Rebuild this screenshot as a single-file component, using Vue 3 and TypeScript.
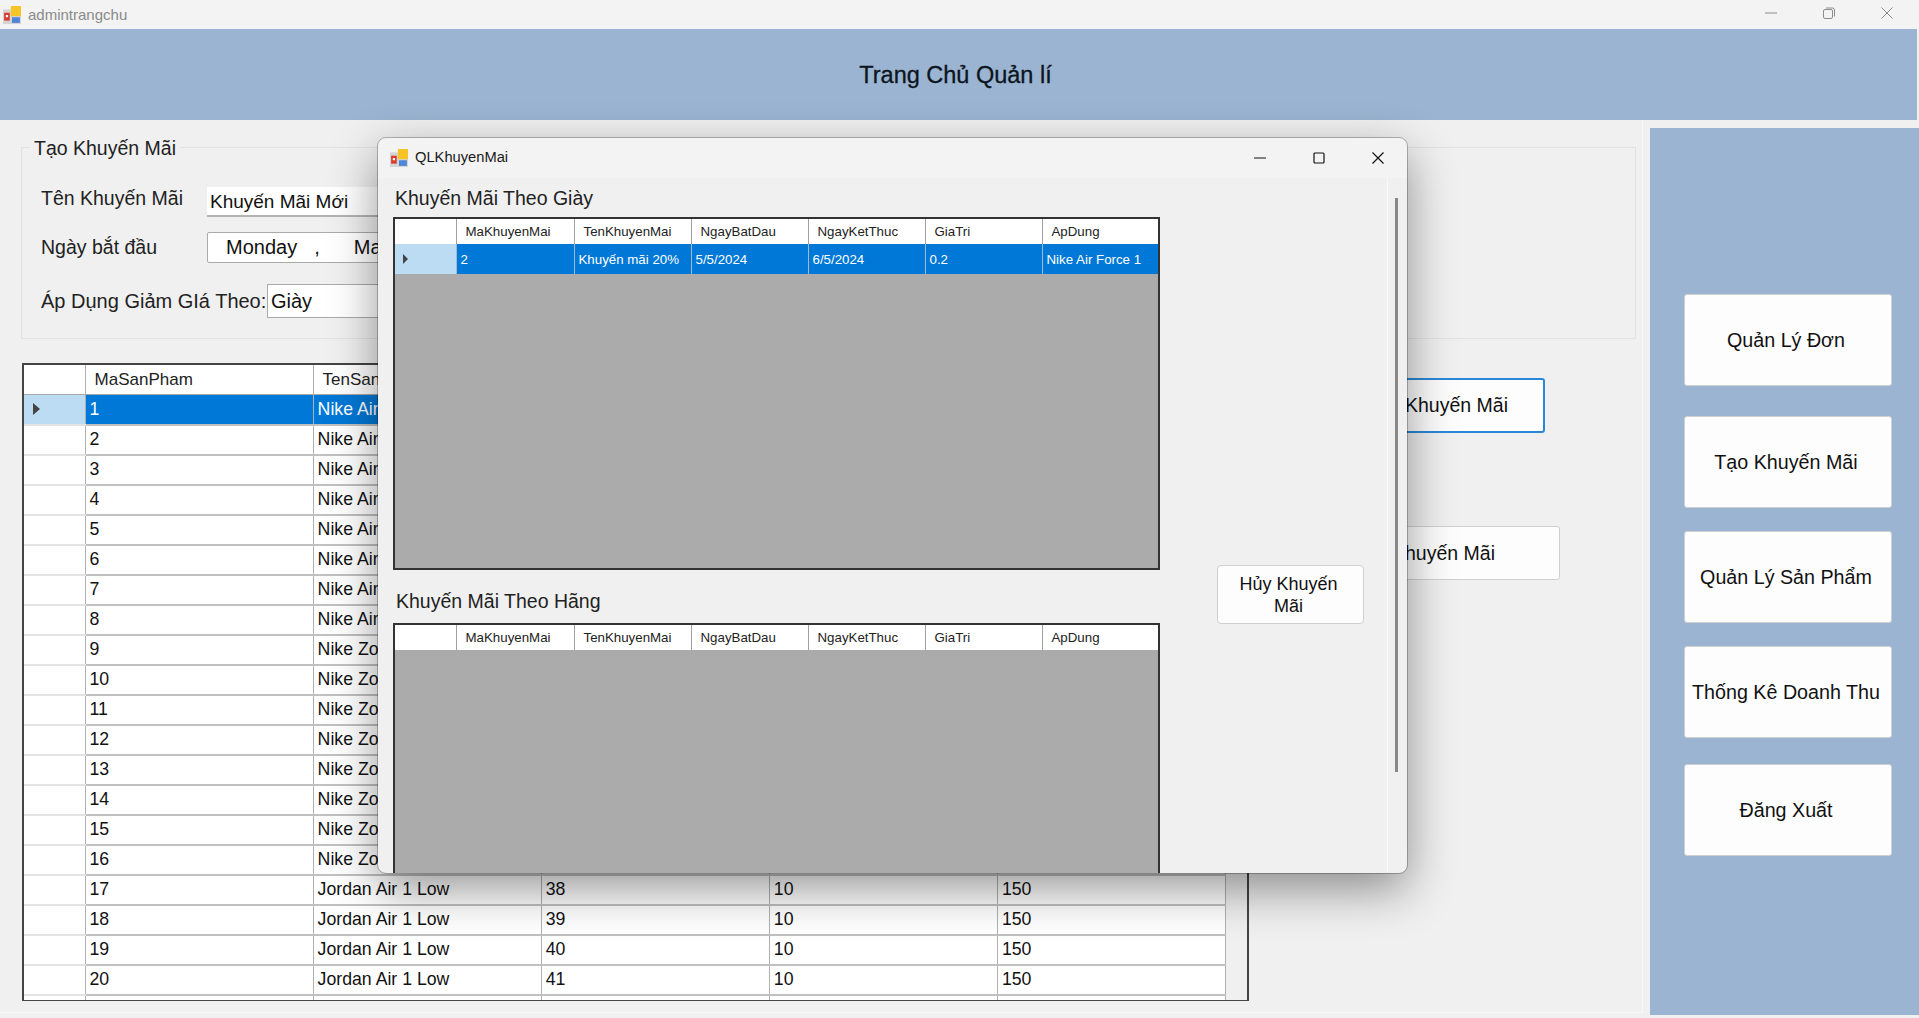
<template>
  <div class="desktop">
    <div class="titlebar">
      <svg class="app-icon" viewBox="0 0 16 16">
        <rect x="0" y="3" width="16" height="13" fill="#d4d4d4" />
        <rect x="1" y="6" width="5" height="7" fill="#d93a2b" />
        <rect x="2.5" y="8" width="2" height="2" fill="#fff" />
        <rect x="7" y="0" width="9" height="9" fill="#f6c425" />
        <rect x="8" y="10" width="7" height="5" fill="#4d86d8" />
      </svg>
      <span class="titlebar-text">admintrangchu</span>
      <div class="win-controls">
        <svg viewBox="0 0 12 12"><path d="M0 6h12" /></svg>
        <svg viewBox="0 0 12 12"><rect x="0.5" y="2.5" width="9" height="9" rx="1.5" /><path d="M3 1h6.5A2 2 0 0 1 11.5 3v6.5" /></svg>
        <svg viewBox="0 0 12 12"><path d="M0.5 0.5l11 11M11.5 0.5l-11 11" /></svg>
      </div>
    </div>

    <header class="banner">Trang Chủ Quản lí</header>

    <div class="content">
      <main class="left">
        <fieldset class="group">
          <legend><span class="legend-text">Tạo Khuyến Mãi</span></legend>
          <div class="form-row row-name">
            <label class="lbl">Tên Khuyến Mãi</label>
            <div class="text-input">Khuyến Mãi Mới</div>
          </div>
          <div class="form-row row-date">
            <label class="lbl">Ngày bắt đầu</label>
            <div class="date-input"><span>Monday</span><span class="comma">,</span><span>May</span></div>
          </div>
          <div class="form-row row-type">
            <label class="lbl lbl-wide">Áp Dụng Giảm GIá Theo:</label>
            <div class="combo">Giày</div>
          </div>
        </fieldset>

        <div class="products-row">
          <div class="products">
            <table class="product-table">
              <colgroup>
                <col class="c-head" />
                <col v-for="n in 5" :key="n" class="c-prod" />
              </colgroup>
              <thead>
                <tr>
                  <th></th>
                  <th v-for="c in productCols" :key="c">{{ c }}</th>
                </tr>
              </thead>
              <tbody>
                <tr v-for="(p, i) in products" :key="p.id" :class="{ selected: i === 0 }">
                  <td class="row-head"><span v-if="i === 0" class="arrow"></span></td>
                  <td>{{ p.id }}</td>
                  <td>{{ p.name }}</td>
                  <td>{{ p.size }}</td>
                  <td>{{ p.qty }}</td>
                  <td>{{ p.price }}</td>
                </tr>
                <!-- next row is scrolled out, only its top shows -->
                <tr>
                  <td class="row-head"></td>
                  <td v-for="n in 5" :key="n"></td>
                </tr>
              </tbody>
            </table>
          </div>
          <div class="actions">
            <button class="btn action focused">Tạo Khuyến Mãi</button>
            <button class="btn action second">Xem Khuyến Mãi</button>
          </div>
        </div>
      </main>

      <aside class="side">
        <button v-for="m in menu" :key="m.label" class="btn side-btn" :style="{ marginTop: m.gap + 'px' }">{{ m.label }}</button>
      </aside>
    </div>

    <section class="modal">
      <div class="modal-title">
        <svg class="app-icon" viewBox="0 0 16 16">
          <rect x="0" y="3" width="16" height="13" fill="#d4d4d4" />
          <rect x="1" y="6" width="5" height="7" fill="#d93a2b" />
          <rect x="2.5" y="8" width="2" height="2" fill="#fff" />
          <rect x="7" y="0" width="9" height="9" fill="#f6c425" />
          <rect x="8" y="10" width="7" height="5" fill="#4d86d8" />
        </svg>
        <span>QLKhuyenMai</span>
        <div class="modal-controls">
          <svg viewBox="0 0 12 12"><path d="M0 6h12" /></svg>
          <svg viewBox="0 0 12 12"><rect x="1" y="1" width="10" height="10" rx="1" /></svg>
          <svg viewBox="0 0 12 12"><path d="M0.5 0.5l11 11M11.5 0.5l-11 11" /></svg>
        </div>
      </div>
      <div class="modal-body">
        <div class="modal-left">
          <h3 class="grid-label">Khuyến Mãi Theo Giày</h3>
          <div class="promo-grid">
            <table class="promo-table">
              <colgroup>
                <col class="c-promo-head" />
                <col v-for="c in promoCols" :key="c" class="c-promo" />
              </colgroup>
              <thead>
                <tr><th></th><th v-for="c in promoCols" :key="c">{{ c }}</th></tr>
              </thead>
              <tbody>
                <tr class="selected">
                  <td class="row-head"><span class="arrow small"></span></td>
                  <td v-for="v in promoRow" :key="v">{{ v }}</td>
                </tr>
              </tbody>
            </table>
          </div>
          <h3 class="grid-label second-label">Khuyến Mãi Theo Hãng</h3>
          <div class="promo-grid">
            <table class="promo-table">
              <colgroup>
                <col class="c-promo-head" />
                <col v-for="c in promoCols" :key="c" class="c-promo" />
              </colgroup>
              <thead>
                <tr><th></th><th v-for="c in promoCols" :key="c">{{ c }}</th></tr>
              </thead>
            </table>
          </div>
        </div>
        <button class="btn cancel">Hủy Khuyến Mãi</button>
      </div>
      <div class="modal-track"></div>
      <div class="modal-thumb"></div>
    </section>
  </div>
</template>

<script setup lang="ts">
interface Product {
  id: number
  name: string
  size: number
  qty: number
  price: number
}

const productCols = ['MaSanPham', 'TenSanPham', 'KichCo', 'SoLuong', 'Gia']
const promoCols = ['MaKhuyenMai', 'TenKhuyenMai', 'NgayBatDau', 'NgayKetThuc', 'GiaTri', 'ApDung']
const promoRow = ['2', 'Khuyến mãi 20%', '5/5/2024', '6/5/2024', '0.2', 'Nike Air Force 1']

const menu = [
  { label: 'Quản Lý Đơn', gap: 166 },
  { label: 'Tạo Khuyến Mãi', gap: 30 },
  { label: 'Quản Lý Sản Phẩm', gap: 23 },
  { label: 'Thống Kê Doanh Thu', gap: 23 },
  { label: 'Đăng Xuất', gap: 26 },
]

const nameFor = (id: number) => {
  if (id <= 8) return 'Nike Air Force 1'
  if (id <= 16) return 'Nike Zoom Fly'
  return 'Jordan Air 1 Low'
}

const products: Product[] = Array.from({ length: 20 }, (_, i) => {
  const id = i + 1
  return { id, name: nameFor(id), size: 38 + (i % 8), qty: 10, price: 150 }
})
</script>

<style scoped>
.desktop {
  position: relative;
  width: 1919px;
  height: 1018px;
  overflow: hidden;
  background: #f0f0f0;
  font-family: "Liberation Sans", Arial, sans-serif;
  color: #111;
}

.titlebar {
  height: 29px;
  display: flex;
  align-items: center;
  padding-left: 3px;
  background: #f3f3f3;
  box-sizing: border-box;
}

.app-icon {
  width: 18px;
  height: 18px;
  flex: none;
}

.titlebar-text {
  margin-left: 7px;
  font-size: 15px;
  color: #8a8a8a;
}

.win-controls {
  margin-left: auto;
  display: flex;
  gap: 46px;
  padding: 0 26px 4px 0;
}

.win-controls svg {
  width: 12px;
  height: 12px;
  fill: none;
  stroke: #8c8c8c;
  stroke-width: 1;
}

.banner {
  height: 91px;
  width: 1917px;
  background: #9ab4d1;
  display: flex;
  align-items: center;
  justify-content: center;
  font-size: 23.5px;
  color: #0c1420;
  -webkit-text-stroke: 0.3px #0c1420;
  padding: 2px 6px 0 0;
  box-sizing: border-box;
}

.content {
  display: flex;
  height: 898px;
}

.left {
  width: 1643px;
  height: 893px;
  flex: none;
  border-right: 1px solid #f8f8f8;
  border-bottom: 1px solid #f8f8f8;
  padding-left: 22px;
  box-sizing: border-box;
}

.group {
  margin: 16px 0 0 -1px;
  padding: 0;
  width: 1615px;
  height: 203px;
  box-sizing: border-box;
  border: 1px solid #e2e2e2;
}

.group legend {
  margin-left: 8px;
  padding: 0 4px;
  font-size: 19.5px;
  line-height: 22px;
  color: #222;
}

.legend-text {
  position: relative;
  top: 1px;
}

.form-row {
  display: flex;
  align-items: center;
  padding-left: 19px;
}

.row-name {
  margin-top: 29px;
  height: 30px;
}

.row-name .lbl {
  margin-bottom: 8px;
}

.row-date {
  margin-top: 15px;
  height: 31px;
}

.row-type {
  margin-top: 21px;
  height: 34px;
}

.lbl {
  width: 166px;
  flex: none;
  font-size: 19.5px;
  color: #222;
}

.lbl-wide {
  width: 226px;
  font-size: 20px;
  white-space: nowrap;
}

.text-input {
  width: 300px;
  height: 30px;
  background: #fff;
  border-bottom: 2px solid #b4b4b4;
  box-sizing: border-box;
  padding-left: 3px;
  font-size: 19px;
  line-height: 30px;
}

.date-input {
  width: 300px;
  height: 31px;
  background: #fff;
  border: 1px solid #aaa;
  border-radius: 2px;
  box-sizing: border-box;
  display: flex;
  align-items: center;
  padding-left: 18px;
  font-size: 20px;
  white-space: nowrap;
}

.comma {
  margin-left: 17px;
  margin-right: 34px;
}

.combo {
  width: 300px;
  height: 34px;
  background: #fff;
  border: 1px solid #aaa;
  box-sizing: border-box;
  padding-left: 3px;
  font-size: 20px;
  line-height: 32px;
}

.products-row {
  display: flex;
  margin: 24px 0 0 0;
}

.products {
  width: 1227px;
  height: 638px;
  flex: none;
  border: 2px solid #444;
  border-bottom-width: 1px;
  box-sizing: border-box;
  overflow: hidden;
  background: #f0f0f0;
}

.product-table {
  table-layout: fixed;
  border-collapse: collapse;
  width: 1202px;
  font-size: 17.7px;
}

.c-head {
  width: 61px;
}

.c-prod {
  width: 228px;
}

.product-table th {
  height: 29px;
  padding: 0 0 0 9px;
  background: #fff;
  border-right: 1px solid #b0b0b0;
  border-bottom: 1px solid #a8a8a8;
  font-size: 17px;
  font-weight: 400;
  text-align: left;
  color: #222;
}

.product-table td {
  height: 30px;
  padding: 0 0 0 4px;
  box-sizing: border-box;
  background: #fff;
  border-right: 1px solid #b0b0b0;
  border-bottom: 2px solid #c0c0c0;
  white-space: nowrap;
  overflow: hidden;
}

.product-table td.row-head {
  background: #fff;
  border-bottom: 2px solid #e4e4e4;
  padding-left: 9px;
}

tr.selected td {
  background: #0078d7;
  color: #fff;
}

.product-table tr.selected td.row-head,
.promo-table tr.selected td.row-head {
  background: #bcdcf4;
}

.arrow {
  display: block;
  width: 0;
  height: 0;
  border-left: 7px solid #444;
  border-top: 6px solid transparent;
  border-bottom: 6px solid transparent;
}

.actions {
  position: relative;
  flex: 1;
}

.btn {
  font-family: inherit;
  background: #fdfdfd;
  border: 1px solid #d0d0d0;
  border-radius: 3px;
  color: #111;
  box-sizing: border-box;
}

.action {
  display: block;
  text-align: right;
  white-space: nowrap;
  font-size: 19.5px;
}

.focused {
  width: 300px;
  height: 55px;
  margin-top: 15px;
  margin-left: -4px;
  padding-right: 35px;
  border: 2px solid #2b88d8;
}

.second {
  width: 315px;
  height: 54px;
  margin-top: 93px;
  margin-left: -4px;
  padding-right: 64px;
}

.side {
  width: 269px;
  height: 887px;
  margin: 8px 0 0 7px;
  flex: none;
  background: #9ab4d1;
  display: flex;
  flex-direction: column;
  align-items: flex-start;
  padding-left: 34px;
  box-sizing: border-box;
}

.side-btn {
  width: 208px;
  height: 92px;
  flex: none;
  padding: 0 4px 0 0;
  font-size: 19.7px;
}

.modal {
  position: absolute;
  left: 378px;
  top: 138px;
  width: 1029px;
  height: 735px;
  background: #f0f0f0;
  border-radius: 8px;
  overflow: hidden;
  outline: 1px solid rgba(0, 0, 0, 0.25);
  box-shadow: 0 16px 48px rgba(0, 0, 0, 0.42);
}

.modal-title {
  height: 40px;
  display: flex;
  align-items: center;
  padding-left: 12px;
  background: #f3f3f3;
  font-size: 14.7px;
  color: #1a1a1a;
  box-sizing: border-box;
}

.modal-title > span {
  margin: 0 0 2px 7px;
}

.modal-controls {
  margin-left: auto;
  display: flex;
  gap: 47px;
  padding-right: 23px;
}

.modal-controls svg {
  width: 12px;
  height: 12px;
  fill: none;
  stroke: #111;
  stroke-width: 1.2;
}

.modal-body {
  display: flex;
  align-items: flex-start;
  padding-left: 15px;
}

.modal-left {
  width: 767px;
  flex: none;
}

.grid-label {
  margin: 0;
  height: 39px;
  line-height: 41px;
  font-size: 19.5px;
  font-weight: 400;
  padding-left: 2px;
  color: #222;
}

.second-label {
  margin-top: 14px;
  line-height: 35px;
  padding-left: 3px;
}

.promo-grid {
  height: 353px;
  border: 2px solid #333;
  box-sizing: border-box;
  background: #ababab;
  overflow: hidden;
}

.promo-table {
  table-layout: fixed;
  border-collapse: collapse;
  width: 764px;
  font-size: 13.3px;
}

.c-promo-head {
  width: 61px;
}

.c-promo {
  width: 117px;
}

.c-promo:nth-child(2) {
  width: 118px;
}

.promo-table th {
  height: 25px;
  padding: 0 0 0 9px;
  background: #fff;
  border-right: 1px solid #a0a0a0;
  font-weight: 400;
  text-align: left;
  color: #222;
}

.promo-table td {
  height: 30px;
  padding: 0 0 0 4px;
  box-sizing: border-box;
  border-right: 1px solid #a0b8d0;
  white-space: nowrap;
  overflow: hidden;
}

.promo-table td.row-head {
  padding-left: 8px;
}

.arrow.small {
  border-left-width: 5px;
  border-top-width: 5px;
  border-bottom-width: 5px;
}

.cancel {
  width: 147px;
  height: 59px;
  flex: none;
  margin: 387px 0 0 57px;
  padding: 0 20px 0 16px;
  font-size: 18px;
  line-height: 22px;
  border-radius: 4px;
}

.modal-track {
  position: absolute;
  left: 1009px;
  top: 40px;
  bottom: 0;
  width: 1px;
  background: #f9f9f9;
}

.modal-thumb {
  position: absolute;
  left: 1017px;
  top: 60px;
  width: 3px;
  height: 574px;
  background: #888;
}
</style>

<style>
html,
body {
  margin: 0;
  overflow: hidden;
}
</style>
